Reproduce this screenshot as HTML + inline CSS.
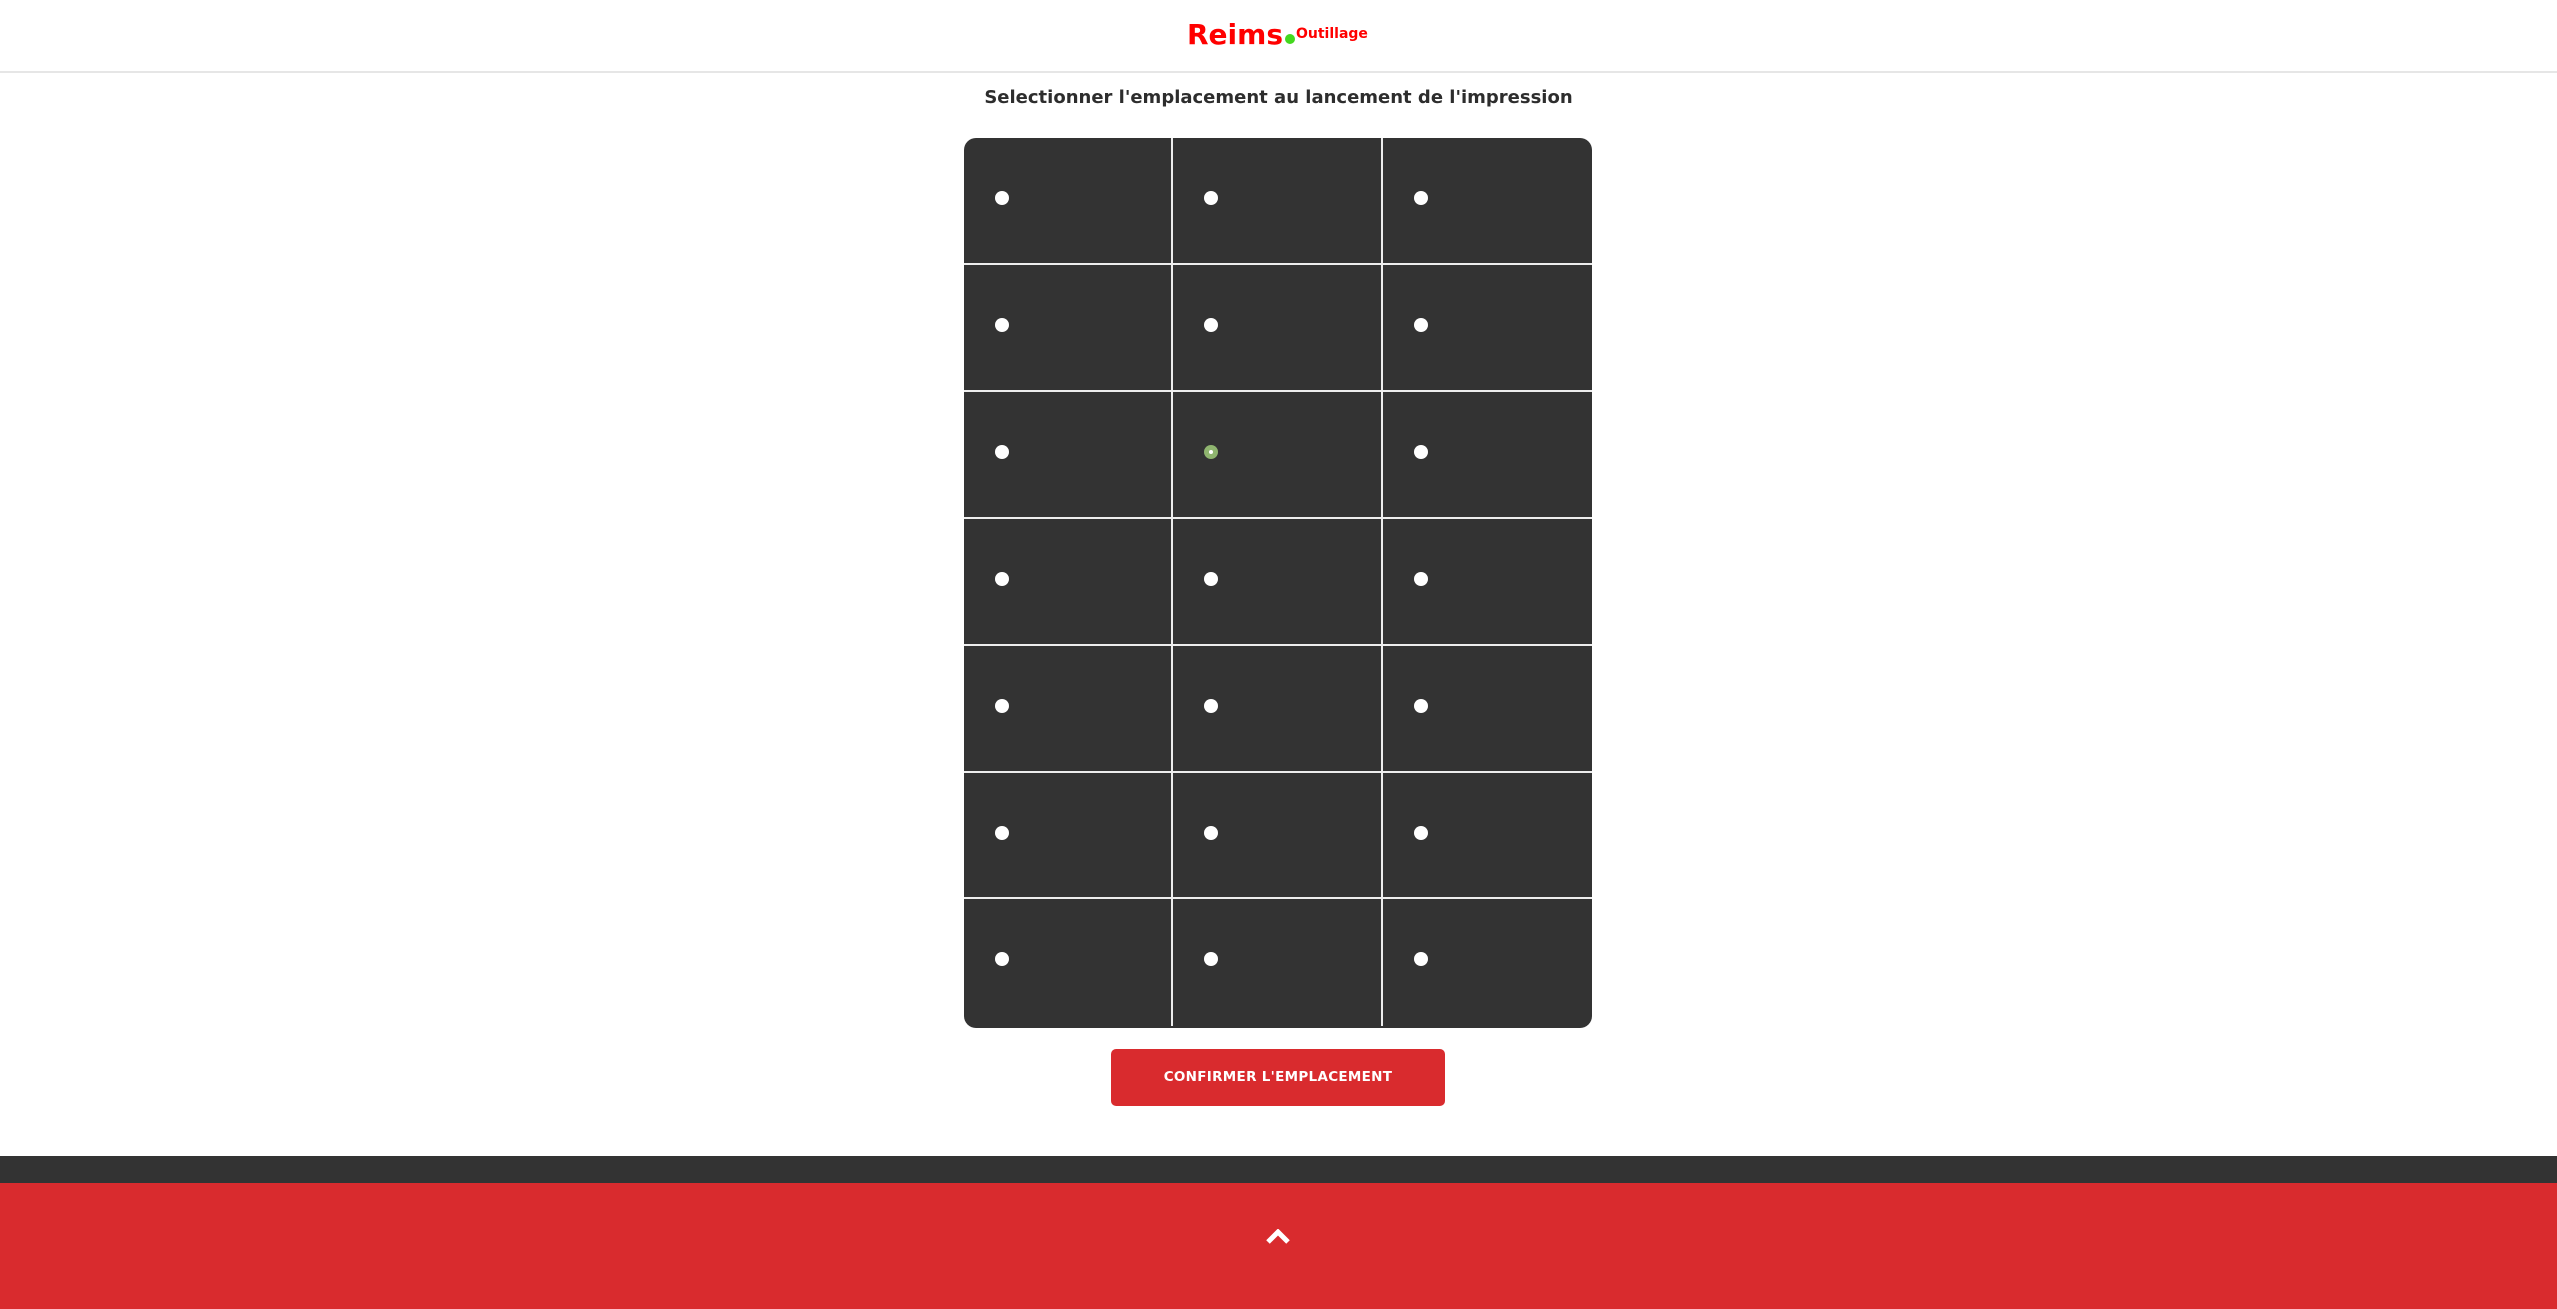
<!DOCTYPE html>
<html><head><meta charset="utf-8"><style>
*{margin:0;padding:0;box-sizing:border-box}
html,body{width:2557px;height:1309px;overflow:hidden}
body{background:#fff;font-family:"DejaVu Sans","Liberation Sans",sans-serif;position:relative}
.hdr{position:absolute;left:0;top:0;width:2557px;height:73px;border-bottom:2px solid #e6e6e6}
.logo{position:absolute;left:1187px;top:18px;white-space:nowrap;color:#f00;font-weight:bold}
.logo .r{font-size:28px}
.logo .d{display:inline-block;width:10px;height:10px;border-radius:50%;background:#44d81e;margin:0 1px 0 2px}
.logo .o{font-size:14px;vertical-align:6px}
h1{position:absolute;top:87px;left:0;width:2557px;text-align:center;font-size:18px;color:#2d2d2d;font-weight:bold}
.grid{position:absolute;left:964px;top:138px;width:628px;height:890px;background:#333;border-radius:12px;overflow:hidden}
.cell{position:absolute;border-right:2px solid #eee;border-bottom:2px solid #eee}
.dot{position:absolute;width:14px;height:14px;border-radius:50%;background:#fff}
.sel{background:#8fb56f}
.sel::after{content:"";position:absolute;left:5px;top:5px;width:4px;height:4px;border-radius:50%;background:#fff}
.btn{position:absolute;left:1111px;top:1049px;width:334px;height:57px;background:#d92b2e;border-radius:5px;color:#fff;font-weight:bold;font-size:13.5px;text-align:center;line-height:57px;letter-spacing:0.3px}
.band{position:absolute;left:0;top:1156px;width:2557px;height:27px;background:#333}
.foot{position:absolute;left:0;top:1183px;width:2557px;height:126px;background:#d92b2e}
</style></head><body>
<div class="hdr"><div class="logo"><span class="r">Reims</span><span class="d"></span><span class="o">Outillage</span></div></div>
<h1>Selectionner l'emplacement au lancement de l'impression</h1>
<div class="grid" id="g">
<script>
var g=document.getElementById('g'),h='';
for(var r=0;r<7;r++)for(var c=0;c<3;c++){
var x=Math.round(c*209.3),y=Math.round(r*126.9),w=Math.round((c+1)*209.3)-x,hh=Math.round((r+1)*126.9)-y;
h+='<div class="cell" style="left:'+x+'px;top:'+y+'px;width:'+w+'px;height:'+hh+'px;'+(c==2?'border-right:none;':'')+(r==6?'border-bottom:none;':'')+'"></div>';
h+='<div class="dot'+(r==2&&c==1?' sel':'')+'" style="left:'+(x+31)+'px;top:'+(y+53)+'px"></div>';}
g.innerHTML=h;
</script>
</div>
<div class="btn">CONFIRMER L'EMPLACEMENT</div>
<div class="band"></div>
<div class="foot"><svg style="position:absolute;left:1266px;top:46px" width="24" height="18" viewBox="0 0 24 18"><path d="M2 13 L12 3 L22 13" fill="none" stroke="#fff" stroke-width="5"/></svg></div>
</body></html>
